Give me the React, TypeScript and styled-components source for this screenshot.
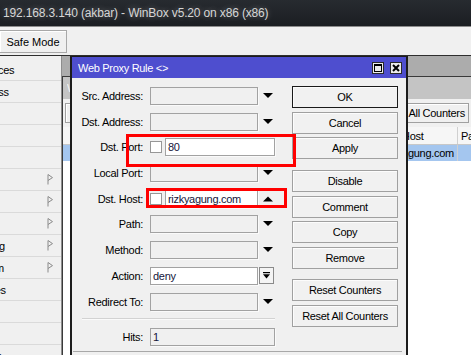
import * as React from 'react';
import styled, { createGlobalStyle } from 'styled-components';

const GlobalStyle = createGlobalStyle`
  html, body {
    margin: 0;
    padding: 0;
    background: #f0f0f0;
  }
  body {
    font-family: 'Liberation Sans', Arial, sans-serif;
    font-size: 11px;
    letter-spacing: -0.3px;
    color: #000;
  }
  * {
    box-sizing: border-box;
  }
`;

const Screen = styled.div`
  width: 471px;
  height: 355px;
  overflow: hidden;
  display: flex;
  flex-direction: column;
  background: #f0f0f0;
`;

const WindowTitle = styled.div`
  flex: none;
  height: 27px;
  padding-left: 3px;
  line-height: 26px;
  white-space: nowrap;
  font-size: 12px;
  letter-spacing: -0.15px;
  color: #d6d6d6;
  background: linear-gradient(#272b30, #1b1e22);
  border-bottom: 1px solid #8c8c8c;
  text-shadow: 0 0 6px rgba(255, 255, 255, 0.28), 0 0 12px rgba(255, 255, 255, 0.18);
`;

const Toolbar = styled.div`
  flex: none;
  height: 29px;
  padding-top: 3px;
  display: flex;
  align-items: flex-start;
  border-bottom: 1px solid #2e2e2e;
`;

const ToolButton = styled.div`
  margin-left: -1px;
  width: 68px;
  height: 23px;
  display: flex;
  align-items: center;
  justify-content: center;
  font-size: 11px;
  letter-spacing: 0;
  background: #f0f0f0;
  border: 1px solid #a8a8a8;
  box-shadow: inset 1px 1px 0 #fff;
`;

const Main = styled.div`
  flex: 1;
  min-height: 0;
  display: flex;
`;

const Sidebar = styled.div`
  flex: none;
  width: 62px;
  padding-top: 3px;
  border-right: 1px solid #8d8d8d;
  overflow: hidden;
`;

const MenuRow = styled.div`
  height: 22px;
  display: flex;
  align-items: center;
  justify-content: space-between;
  padding-right: 7px;
  border-bottom: 1px solid #dadada;
  white-space: nowrap;
  overflow: hidden;
`;

const MenuText = styled.span`
  margin-left: -31px;
`;

const Workspace = styled.div`
  flex: 1;
  position: relative;
  overflow: hidden;
  background: #acacac;
`;

const BgWindow = styled.div`
  position: absolute;
  left: 0;
  top: 20px;
  right: -20px;
  bottom: -20px;
  display: flex;
  flex-direction: column;
  background: #fff;
  border: 1px solid #3a3a3a;
`;

const BgTitle = styled.div`
  height: 22px;
  line-height: 22px;
  padding-left: 4px;
  color: #f4f4f4;
  background: #c4c4c4;
`;

// only the first letter of the covered window's caption peeks out
const BgCaption = styled.span`
  display: inline-block;
  width: 5px;
  overflow: hidden;
  vertical-align: top;
`;

const BgToolbar = styled.div`
  height: 28px;
  display: flex;
  align-items: center;
  gap: 3px;
  padding: 0 21px 0 2px;
  background: #f0f0f0;
`;

const BgButton = styled.div<{ $w: number }>`
  width: ${p => p.$w}px;
  height: 20px;
  display: flex;
  align-items: center;
  justify-content: center;
  white-space: nowrap;
  background: #f0f0f0;
  border: 1px solid #a0a0a0;
  box-shadow: inset 1px 1px 0 #fff;
`;

const Spacer = styled.div`
  flex: 1;
`;

const cols = '18px 75px 75px 70px 77px 80px 1fr';

const BgHeader = styled.div`
  height: 18px;
  display: grid;
  grid-template-columns: ${cols};
  background: #f6f6f6;
  border-bottom: 1px solid #c8c8c8;
`;

const BgRow = styled.div<{ $selected?: boolean }>`
  height: 16px;
  display: grid;
  grid-template-columns: ${cols};
  background: ${p => (p.$selected ? '#a4c6ef' : '#fff')};
`;

const Cell = styled.div`
  padding-left: 3px;
  display: flex;
  align-items: center;
  white-space: nowrap;
  overflow: hidden;
  border-right: 1px solid #d0d0d0;
`;

const Dialog = styled.div`
  position: absolute;
  left: 8px;
  top: -1px;
  width: 338px;
  bottom: -30px;
  display: flex;
  flex-direction: column;
  background: #f0f0f0;
  border: 2px solid #1c1c1c;
`;

const DialogTitle = styled.div`
  height: 21px;
  flex: none;
  display: flex;
  align-items: center;
  justify-content: space-between;
  padding: 0 4px 0 6px;
  color: #fff;
  background: #4e4ecf;
`;

const TitleButtons = styled.div`
  display: flex;
  gap: 6px;
`;

const TitleButton = styled.div`
  width: 12px;
  height: 12px;
  display: flex;
  align-items: center;
  justify-content: center;
  background: #ececec;
  border: 1px solid #2a2a2a;
`;

const DialogBody = styled.div`
  display: flex;
  align-items: flex-start;
`;

const Form = styled.div`
  padding-top: 9px;
  display: grid;
  grid-template-columns: 71px 125px;
  grid-template-rows: repeat(9, 18px) 2px 18px;
  column-gap: 7px;
  row-gap: 7.7px;
  align-items: center;
`;

const Label = styled.div`
  text-align: right;
  white-space: nowrap;
`;

const FieldCell = styled.div`
  height: 18px;
  display: flex;
  align-items: center;
`;

const Box = styled.div<{ $w?: number; $white?: boolean }>`
  width: ${p => (p.$w ? `${p.$w}px` : 'auto')};
  flex: ${p => (p.$w ? 'none' : '1')};
  height: 18px;
  padding-left: 2px;
  display: flex;
  align-items: center;
  color: #14143a;
  background: ${p => (p.$white ? '#fff' : '#f0f0f0')};
  border: 1px solid #a2a2a2;
  box-shadow: 1px 1px 0 #fafafa;
`;

const Check = styled.div`
  flex: none;
  width: 12px;
  height: 12px;
  margin-right: 3px;
  background: #fff;
  border: 1px solid #979797;
`;

const ArrowSlot = styled.div`
  padding-left: 5px;
  display: flex;
  align-items: center;
`;

const DropButton = styled.div`
  margin-left: 1px;
  width: 15px;
  height: 17px;
  display: flex;
  align-items: center;
  justify-content: center;
  background: #f4f4f4;
  border: 1px solid #8a8a8a;
`;

const Separator = styled.div`
  grid-column: 1 / 3;
  align-self: stretch;
  margin-left: 10px;
  border-top: 1px solid #d2d2d2;
  border-bottom: 1px solid #fafafa;
`;

const ButtonsCol = styled.div`
  width: 106px;
  margin-left: 17px;
  padding-top: 8px;
  display: flex;
  flex-direction: column;
  gap: 3.7px;
`;

const DlgButton = styled.div<{ $primary?: boolean; $group?: boolean }>`
  height: 22px;
  margin-top: ${p => (p.$group ? '6.8px' : '0')};
  display: flex;
  align-items: center;
  justify-content: center;
  white-space: nowrap;
  background: #f1f1f1;
  border: 1px solid ${p => (p.$primary ? '#1a1a1a' : '#a0a0a0')};
  box-shadow: inset 1px 1px 0 #fcfcfc;
`;

const StatusBar = styled.div`
  height: 20px;
  margin: 5px 4px 0 1px;
  border-top: 1px solid #a8a8a8;
`;

const Marker = styled.div`
  position: absolute;
  border: 3px solid #ff0000;
  pointer-events: none;
`;

const Down = () => (
  <svg width="10" height="6" viewBox="0 0 10 6">
    <polygon points="0,0 10,0 5,5" fill="#000" />
  </svg>
);

const Up = () => (
  <svg width="10" height="6" viewBox="0 0 10 6">
    <polygon points="0,5.5 10,5.5 5,0.5" fill="#000" />
  </svg>
);

const DropIcon = () => (
  <svg width="9" height="9" viewBox="0 0 9 9">
    <rect x="1" y="1" width="7" height="1.2" fill="#000" />
    <polygon points="1,3.2 8,3.2 4.5,7.5" fill="#000" />
  </svg>
);

const SubArrow = () => (
  <svg width="7" height="11" viewBox="0 0 7 11">
    <path d="M1 0.5 V10.5 M1 0.5 L5.5 3.6 L1 6.5" stroke="#8a8a8a" fill="none" strokeWidth="1" />
  </svg>
);

const MaxIcon = () => (
  <svg width="8" height="8" viewBox="0 0 8 8">
    <rect x="0.5" y="0.5" width="7" height="7" fill="none" stroke="#000" />
    <rect x="0" y="0" width="8" height="2" fill="#000" />
  </svg>
);

const CloseIcon = () => (
  <svg width="8" height="8" viewBox="0 0 8 8">
    <path d="M1 1 L7 7 M7 1 L1 7" stroke="#000" strokeWidth="2" />
  </svg>
);

const menu = [
  { name: 'Interfaces' },
  { name: 'Wireless' },
  { name: 'Bridge' },
  { name: 'PPP' },
  { name: 'Mesh' },
  { name: 'IP', sub: true },
  { name: 'IPv6', sub: true },
  { name: 'MPLS', sub: true },
  { name: 'Routing', sub: true },
  { name: 'System', sub: true },
  { name: 'Queues' },
  { name: 'Files' },
  { name: 'Log' },
  { name: 'Radius' },
];

const plainRows = ['Src. Address', 'Dst. Address'];

const App = () => {
  return (
    <Screen>
      <GlobalStyle />
      <WindowTitle>192.168.3.140 (akbar) - WinBox v5.20 on x86 (x86)</WindowTitle>
      <Toolbar>
        <ToolButton>Safe Mode</ToolButton>
      </Toolbar>
      <Main>
        <Sidebar>
          {menu.map(m => (
            <MenuRow key={m.name}>
              <MenuText>{m.name}</MenuText>
              {m.sub && <SubArrow />}
            </MenuRow>
          ))}
        </Sidebar>
        <Workspace>
          {/* list window behind the rule dialog, mostly covered */}
          <BgWindow>
            <BgTitle><BgCaption>W</BgCaption></BgTitle>
            <BgToolbar>
              <BgButton $w={22} />
              <Spacer />
              <BgButton $w={94}>Reset All Counters</BgButton>
            </BgToolbar>
            <BgHeader>
              <Cell />
              <Cell />
              <Cell />
              <Cell />
              <Cell />
              <Cell>Dst. Host</Cell>
              <Cell>Path</Cell>
            </BgHeader>
            <BgRow $selected>
              <Cell />
              <Cell />
              <Cell />
              <Cell />
              <Cell />
              <Cell>rizkyagung.com</Cell>
              <Cell />
            </BgRow>
          </BgWindow>

          <Dialog>
            <DialogTitle>
              <span>Web Proxy Rule &lt;&gt;</span>
              <TitleButtons>
                <TitleButton><MaxIcon /></TitleButton>
                <TitleButton><CloseIcon /></TitleButton>
              </TitleButtons>
            </DialogTitle>
            <DialogBody>
              <Form>
                {plainRows.map(r => (
                  <React.Fragment key={r}>
                    <Label>{r}:</Label>
                    <FieldCell>
                      <Box $w={108} />
                      <ArrowSlot><Down /></ArrowSlot>
                    </FieldCell>
                  </React.Fragment>
                ))}
                <Label>Dst. Port:</Label>
                <FieldCell>
                  <Check />
                  <Box $white>80</Box>
                </FieldCell>
                <Label>Local Port:</Label>
                <FieldCell>
                  <Box $w={108} />
                  <ArrowSlot><Down /></ArrowSlot>
                </FieldCell>
                <Label>Dst. Host:</Label>
                <FieldCell>
                  <Check />
                  <Box $w={93} $white>rizkyagung.com</Box>
                  <ArrowSlot><Up /></ArrowSlot>
                </FieldCell>
                <Label>Path:</Label>
                <FieldCell>
                  <Box $w={108} />
                  <ArrowSlot><Down /></ArrowSlot>
                </FieldCell>
                <Label>Method:</Label>
                <FieldCell>
                  <Box $w={108} />
                  <ArrowSlot><Down /></ArrowSlot>
                </FieldCell>
                <Label>Action:</Label>
                <FieldCell>
                  <Box $w={108} $white>deny</Box>
                  <DropButton><DropIcon /></DropButton>
                </FieldCell>
                <Label>Redirect To:</Label>
                <FieldCell>
                  <Box $w={108} />
                  <ArrowSlot><Down /></ArrowSlot>
                </FieldCell>
                <Separator />
                <Label>Hits:</Label>
                <FieldCell>
                  <Box>1</Box>
                </FieldCell>
              </Form>
              <ButtonsCol>
                <DlgButton $primary>OK</DlgButton>
                <DlgButton>Cancel</DlgButton>
                <DlgButton>Apply</DlgButton>
                <DlgButton $group>Disable</DlgButton>
                <DlgButton>Comment</DlgButton>
                <DlgButton>Copy</DlgButton>
                <DlgButton>Remove</DlgButton>
                <DlgButton $group>Reset Counters</DlgButton>
                <DlgButton>Reset All Counters</DlgButton>
              </ButtonsCol>
            </DialogBody>
            <StatusBar />
            <Marker style={{ left: 54, top: 77, width: 170, height: 33 }} />
            <Marker style={{ left: 74, top: 131, width: 141, height: 20 }} />
          </Dialog>
        </Workspace>
      </Main>
    </Screen>
  );
};

export default App;
